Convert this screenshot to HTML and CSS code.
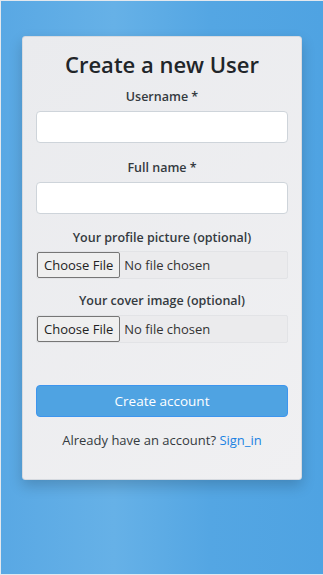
FILE: index.html
```html
<!DOCTYPE html>
<html lang="en">
<head>
    <meta charset="UTF-8">
    <meta name="viewport" content="width=device-width, initial-scale=1.0">
    <title>Create a new User</title>
    <link rel="stylesheet" href="styles.css">
</head>
<body>
    <div class="page">
        <form class="card" onsubmit="return false">
            <h1 class="title">Create a new User</h1>

            <div class="field">
                <label for="username">Username *</label>
                <input class="text-input" type="text" id="username">
            </div>

            <div class="field">
                <label for="fullname">Full name *</label>
                <input class="text-input" type="text" id="fullname">
            </div>

            <div class="field field-file">
                <label for="avatar">Your profile picture (optional)</label>
                <input class="file-input" type="file" id="avatar">
            </div>

            <div class="field field-file">
                <label for="cover">Your cover image (optional)</label>
                <input class="file-input" type="file" id="cover">
            </div>

            <button class="submit-button" type="submit">Create account</button>

            <p class="signin">Already have an account? <a href="#">Sign_in</a></p>
        </form>
    </div>
</body>
</html>
```

FILE: styles.css
```css
/* Page background */
html, body {
    margin: 0;
    padding: 0;
    font-family: "Segoe UI", "Open Sans", sans-serif;
}

.page {
    min-height: 575px;
    box-sizing: border-box;
    padding-top: 35px;
    border-top: 1px solid #e3e8ee;
    border-left: 1px solid #e3e8ee;
    border-bottom: 1px solid #e3e8ee;
    background: linear-gradient(90deg, #59a8e4 0%, #66b1e7 35%, #54a6e3 65%, #4fa3e2 100%);
}

/* Card */
.card {
    width: 280px;
    margin: 0 auto;
    box-sizing: border-box;
    padding: 11px 13px 30px 13px;
    background: linear-gradient(135deg, #eaebee, #f0f0f2);
    border: 1px solid #d6dae0;
    border-radius: 3px;
    box-shadow: 0 6px 14px rgba(0, 0, 0, 0.18);
    text-align: center;
}

.title {
    margin: 0 0 7px 0;
    font-size: 22px;
    font-weight: 600;
    color: #212529;
    line-height: 32px;
}

.field {
    margin-bottom: 15px;
}

/* file fields sit a bit tighter */
.field-file {
    margin-top: -1px;
    margin-bottom: 13px;
}

.field label {
    display: block;
    font-size: 12.5px;
    font-weight: 600;
    color: #343a40;
    line-height: 20px;
    margin-bottom: 4px;
}

.field-file label {
    margin-bottom: 3px;
}

.field-file + .field-file label {
    margin-bottom: 4px;
}

.text-input {
    display: block;
    width: 100%;
    height: 32px;
    box-sizing: border-box;
    border: 1px solid #ced4da;
    border-radius: 4px;
    background: #fff;
    font-family: inherit;
}

.file-input {
    display: block;
    width: 100%;
    height: 28px;
    box-sizing: border-box;
    background: #ebebed;
    border: 1px solid #e2e3e6;
    border-radius: 2px;
    font-family: inherit;
    font-size: 13px;
    color: #333;
    text-align: left;
}

.file-input::file-selector-button {
    height: 26px;
    margin: 0 4px 0 0;
    padding: 0 6px;
    font-family: inherit;
    font-size: 13px;
    color: #222;
    background: #efefef;
    border: 1px solid #767676;
    border-radius: 2px;
}

.submit-button {
    display: block;
    width: 100%;
    height: 32px;
    margin-top: 42px;
    border: 1px solid #3d95ee;
    border-radius: 4px;
    background: #4fa3e2;
    color: #fff;
    font-family: inherit;
    font-size: 13.5px;
}

.signin {
    margin: 14px 0 0 0;
    font-size: 13px;
    color: #343a40;
}

.signin a {
    color: #1a82e2;
    text-decoration: none;
}
```
